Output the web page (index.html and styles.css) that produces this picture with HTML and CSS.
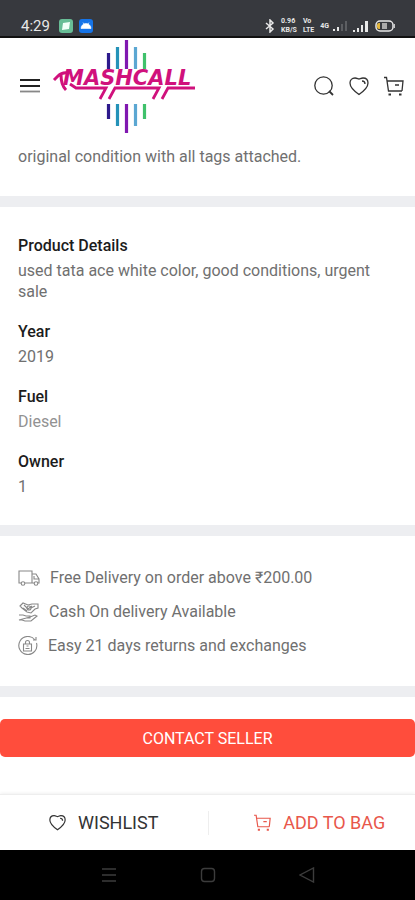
FILE: index.html
```html
<!DOCTYPE html>
<html lang="en">
  <head>
    <meta charset="UTF-8" />
    <meta name="viewport" content="width=device-width, initial-scale=1.0" />
    <title>Mashcall</title>
    <link rel="stylesheet" href="styles.css">
  </head>
  <body>
    <!-- Status bar -->
    <div class="status-bar">
      <span class="clock">4:29</span>
      <svg class="app-badge" width="14" height="14" viewBox="0 0 14 14">
        <rect width="14" height="14" rx="3" fill="#68bd96" />
        <path d="M4 4 L11 3 L10 10 L3 11 Z" fill="#f2fff8" />
      </svg>
      <svg class="app-badge" width="14" height="14" viewBox="0 0 14 14">
        <rect width="14" height="14" rx="3" fill="#1674e8" />
        <path d="M2 9.500a5 5 0 0 1 10 0z M4 3.500l1 2 M10 3.500l-1 2" fill="#fff" stroke="#fff" stroke-width=".6" />
      </svg>
      <div class="status-right">
        <svg width="10" height="14" viewBox="0 0 10 14" fill="none" stroke="#e8e8e8" stroke-width="1.500">
          <path d="M1 4l7 6-3 3V1l3 3-7 6" />
        </svg>
        <div class="tiny"><div>0.96</div><div>KB/S</div></div>
        <div class="tiny"><div>Vo</div><div>LTE</div></div>
        <div class="network">
          <span class="tiny">4G</span>
          <svg width="18" height="10" viewBox="0 0 18 10">
            <path d="M4 8h2v2H4zM8 6h2v4H8z" fill="#e8e8e8" />
            <path d="M12 3h2v7h-2zM16 0h2v10h-2z" fill="#5c5e62" />
          </svg>
        </div>
        <svg width="16" height="14" viewBox="0 0 16 14" fill="#e8e8e8">
          <path d="M0 11h2v2H0zM4 9h2v4H4zM8 6h2v7H8zM12 2h3v11h-3z" />
        </svg>
        <svg width="20" height="12" viewBox="0 0 20 12">
          <rect x="1" y="1" width="17" height="10" rx="4" fill="none" stroke="#e8e8e8" stroke-width="1.500" />
          <path d="M5 3v6H4a2 2 0 0 1-2-2V5a2 2 0 0 1 2-2z" fill="#e3b63c" />
          <rect x="7" y="3" width="5" height="6" fill="#aaa" />
          <path d="M19.300 4v4" stroke="#e8e8e8" />
        </svg>
      </div>
    </div>

    <!-- Header -->
    <header class="header">
      <button class="icon-btn" aria-label="Menu">
        <svg width="20" height="16" viewBox="0 0 20 16" fill="none" stroke-width="1.800">
          <path d="M0 2h20M0 8h20" stroke="#222" />
          <path d="M0 13.500h20" stroke="#888" />
        </svg>
      </button>
      <a class="logo" href="#" aria-label="Mashcall">
        <svg width="146" height="96" viewBox="0 0 146 96">
          <g fill="none" stroke-width="3.200">
            <path d="M56.500 15v16M56.500 66v15" stroke="#2d1a8c" />
            <path d="M65.500 9v22M65.500 66v22" stroke="#2492b8" />
            <path d="M74.500 2v29M74.500 66v29" stroke="#8018b0" />
            <path d="M83.500 9v22M83.500 66v22" stroke="#5ba7d2" />
            <path d="M92.500 15v16M92.500 66v15" stroke="#3fc16b" />
          </g>
          <text class="logo-text" x="11" y="47">MASHCALL</text>
          <g fill="none" stroke="#d0117c">
            <path d="M16 35q-6-1-10 3l-4 4M9 37q0 10 5 15" stroke-width="3" />
            <path d="M18 46l6 4H54l-6 11M57 61l6-11H107l-6 11M110 61l6-11H143" stroke-width="2.800" />
          </g>
        </svg>
      </a>
      <div class="header-actions">
        <button class="icon-btn" aria-label="Search">
          <svg width="20" height="20" viewBox="0 0 20 20" fill="none" stroke="#333" stroke-width="1.300">
            <circle cx="9.500" cy="9.500" r="8.700" />
            <path d="M15 15l4 4" stroke-width="1.800" />
          </svg>
        </button>
        <button class="icon-btn" aria-label="Wishlist">
          <svg width="20" height="20" viewBox="0 0 20 20" fill="none" stroke="#333" stroke-width="1.300">
            <path d="M10 18.500C5 15 1 11 1 7c0-3 2-5 5-5 2 0 3 1 4 1s2-1 4-1c3 0 5 2 5 5 0 4-4 8-9 11.500z" />
            <path d="M13 5q3 0 3 3" />
          </svg>
        </button>
        <button class="icon-btn" aria-label="Cart">
          <svg width="20" height="20" viewBox="0 0 20 20" fill="none" stroke="#333" stroke-width="1.300">
            <path d="M0 1.500h2.500L4.500 15H18M3 5h16l-1 10M11 9h4" />
            <path d="M4.500 18.500h2.500M15 18.500h2.500" stroke-width="2.200" />
          </svg>
        </button>
      </div>
    </header>

    <main class="content">
      <section class="policy">
        <p>original condition with all tags attached.</p>
      </section>

      <!-- Product details -->
      <section class="details">
        <dl>
          <dt>Product Details</dt>
          <dd>used tata ace white color, good conditions, urgent sale</dd>
          <dt>Year</dt>
          <dd>2019</dd>
          <dt>Fuel</dt>
          <dd class="light">Diesel</dd>
          <dt>Owner</dt>
          <dd>1</dd>
        </dl>
      </section>

      <!-- Services -->
      <ul class="services">
        <li>
          <svg width="22" height="18" viewBox="0 0 22 18" fill="none" stroke="#888" stroke-width="1.100">
            <path d="M3 14H1V2h13v12H7M14 5h4l3 5v4h-1M16 14h-2M16 7v3h5" />
            <circle cx="5" cy="14.500" r="1.800" />
            <circle cx="18" cy="14.500" r="1.800" />
          </svg>
          <span>Free Delivery on order above ₹200.00</span>
        </li>
        <li>
          <svg width="21" height="20" viewBox="0 0 21 20" fill="none" stroke="#888" stroke-width="1.100">
            <path d="M2 4l3-3 5 2 4-1h6v4l-3 1-4 4-4-1-5-4zM6 3l4 4 4-3M5 6l4 3M13 6l4-2" />
            <circle cx="11" cy="6" r="2" />
            <path d="M1 13h4l3 1h4v2H8M12 15l5-2 2 1-6 5H7l-3-1H1z" />
          </svg>
          <span>Cash On delivery Available</span>
        </li>
        <li>
          <svg width="20" height="20" viewBox="0 0 20 20" fill="none" stroke="#888" stroke-width="1.100">
            <path d="M17 4A9 9 0 1 0 18.500 7M15 4h3V1" />
            <path d="M5.500 8h8v7h-8zM7.500 8V6.500a2 2 0 0 1 4 0V8M7.500 12.500h4M8.500 10h2" />
          </svg>
          <span>Easy 21 days returns and exchanges</span>
        </li>
      </ul>

      <div class="contact">
        <button class="contact-btn">CONTACT SELLER</button>
      </div>
    </main>

    <!-- Bottom actions -->
    <div class="bottom-bar">
      <button class="action">
        <svg width="17" height="17" viewBox="0 0 20 20" fill="none" stroke="#333" stroke-width="1.400">
          <path d="M10 18.500C5 15 1 11 1 7c0-3 2-5 5-5 2 0 3 1 4 1s2-1 4-1c3 0 5 2 5 5 0 4-4 8-9 11.500z" />
          <path d="M13 5q3 0 3 3" />
        </svg>
        WISHLIST
      </button>
      <button class="action add">
        <svg width="17" height="17" viewBox="0 0 20 20" fill="none" stroke="#e8574b" stroke-width="1.400">
          <path d="M0 1.500h2.500L4.500 15H18M3 5h16l-1 10M11 9h4" />
          <path d="M4.500 18.500h2.500M15 18.500h2.500" stroke-width="2.200" />
        </svg>
        ADD TO BAG
      </button>
    </div>

    <!-- System navigation -->
    <nav class="system-nav">
      <button class="icon-btn" aria-label="Recent apps">
        <svg width="16" height="16" viewBox="0 0 16 16" fill="none" stroke="#3c3c3c" stroke-width="1.400">
          <path d="M1 2h14M1 8h14M1 14h14" />
        </svg>
      </button>
      <button class="icon-btn" aria-label="Home">
        <svg width="16" height="16" viewBox="0 0 16 16" fill="none" stroke="#3c3c3c" stroke-width="1.400">
          <rect x="1.500" y="1.500" width="13" height="13" rx="3" />
        </svg>
      </button>
      <button class="icon-btn" aria-label="Back">
        <svg width="16" height="16" viewBox="0 0 16 16" fill="none" stroke="#3c3c3c" stroke-width="1.400">
          <path d="M14.500 1v14L1 8z" />
        </svg>
      </button>
    </nav>
  </body>
</html>
```

FILE: styles.css
```css
* {
  box-sizing: border-box;
}
body {
  margin: 0;
  min-height: 100vh;
  display: flex;
  flex-direction: column;
  font-family: Roboto, "Liberation Sans", sans-serif;
  font-size: 16px;
  line-height: 21px;
  color: #707070;
  background: #fff;
}
button {
  font-family: inherit;
  border: none;
  background: none;
  padding: 0;
  cursor: pointer;
}
svg {
  display: block;
  flex-shrink: 0;
}
.status-bar {
  display: flex;
  align-items: center;
  gap: 6px;
  height: 38px;
  padding: 16px 20px 0 21px;
  background: #37393e;
  border-bottom: 2px solid #111;
  color: #e8e8e8;
}
.clock {
  margin-right: 3px;
  font-size: 15px;
}
.status-right {
  display: flex;
  align-items: center;
  gap: 6px;
  margin-left: auto;
}
.tiny {
  font-size: 7px;
  font-weight: bold;
  line-height: 9px;
}
.network {
  display: flex;
  align-items: center;
}
.header {
  position: relative;
  z-index: 1;
  display: flex;
  align-items: center;
  height: 112px;
  padding: 0 11px 16px 20px;
}
.logo {
  margin-left: 12px;
}
.logo-text {
  font: italic bold 21px "DejaVu Sans", sans-serif;
  fill: #d0117c;
}
.header-actions {
  display: flex;
  gap: 15px;
  margin-left: auto;
}
.policy {
  margin-top: -4px;
  padding: 0 18px 29px;
}
.policy p {
  margin: 0;
}
.details {
  padding: 28px 18px;
  border-top: 11px solid #edeef1;
  border-bottom: 11px solid #edeef1;
}
.details dl {
  margin: 0;
}
.details dt {
  margin-bottom: 4px;
  color: #1c1c1c;
  font-weight: 500;
}
.details dd {
  margin: 0 0 19px;
}
.details dd:last-child {
  margin-bottom: 0;
}
.details .light {
  color: #929292;
}
.services {
  display: flex;
  flex-direction: column;
  gap: 13px;
  margin: 0;
  padding: 31px 18px 30px;
  list-style: none;
  border-bottom: 11px solid #edeef1;
}
.services li {
  display: flex;
  align-items: center;
  gap: 10px;
}
.contact {
  padding: 22px 0;
}
.contact-btn {
  display: block;
  width: 100%;
  height: 38px;
  border-radius: 5px;
  background: #ff4d3c;
  color: #fff;
  font-size: 16px;
}
.bottom-bar {
  display: grid;
  grid-template-columns: 1fr 1fr;
  align-items: center;
  height: 56px;
  margin-top: auto;
  border-top: 1px solid #eee;
  box-shadow: 0 -1px 3px rgba(0, 0, 0, 0.06);
}
.action {
  display: flex;
  align-items: center;
  justify-content: center;
  gap: 12px;
  height: 24px;
  color: #333;
  font-size: 18px;
}
.add {
  padding-left: 16px;
  border-left: 1px solid #eee;
  color: #e8574b;
}
.system-nav {
  display: flex;
  align-items: center;
  justify-content: center;
  gap: 83px;
  height: 50px;
  background: #000;
}
```
